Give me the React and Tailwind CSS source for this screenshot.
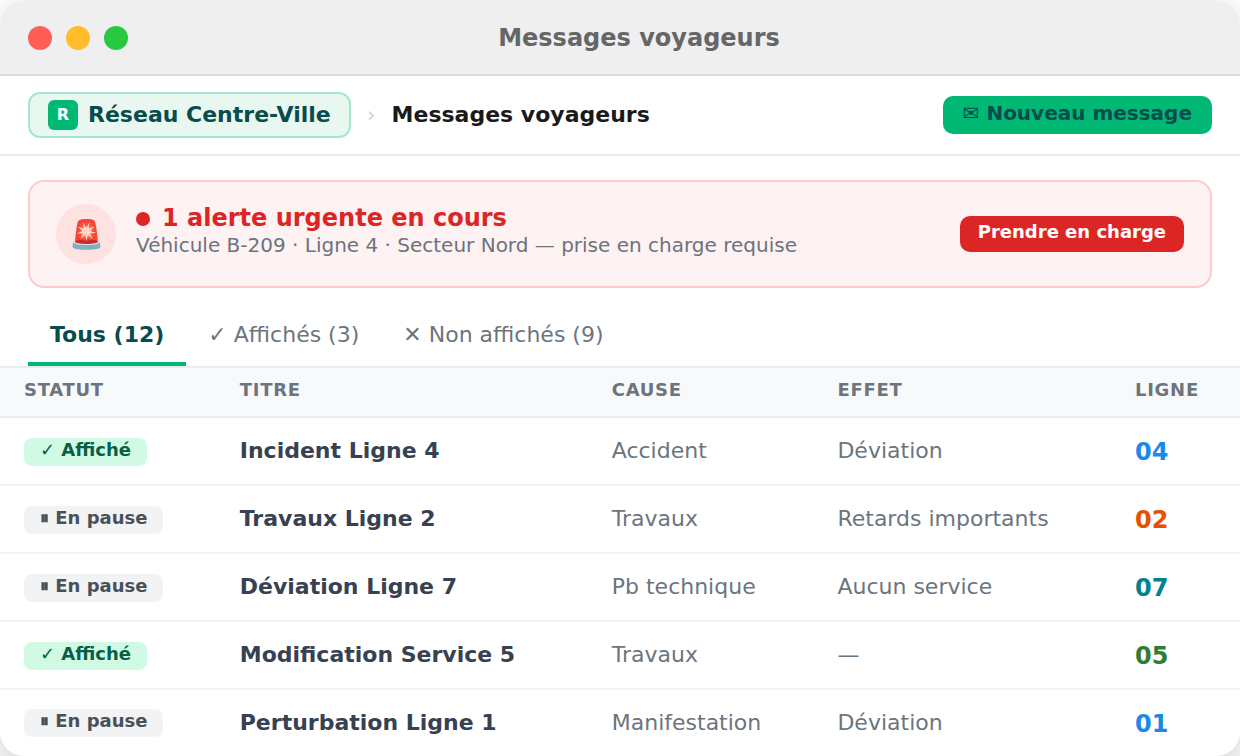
import React, { useState } from 'react';

const TABS = [
    { id: 'all', label: 'Tous (12)' },
    { id: 'shown', label: '✓ Affichés (3)' },
    { id: 'hidden', label: '✕ Non affichés (9)' },
];

const MESSAGES = [
    { id: 1, active: true, title: 'Incident Ligne 4', cause: 'Accident', effect: 'Déviation', line: '04', color: 'text-[#1e88e5]' },
    { id: 2, active: false, title: 'Travaux Ligne 2', cause: 'Travaux', effect: 'Retards importants', line: '02', color: 'text-[#e65100]' },
    { id: 3, active: false, title: 'Déviation Ligne 7', cause: 'Pb technique', effect: 'Aucun service', line: '07', color: 'text-[#00838f]' },
    { id: 4, active: true, title: 'Modification Service 5', cause: 'Travaux', effect: '—', line: '05', color: 'text-[#2e7d32]' },
    { id: 5, active: false, title: 'Perturbation Ligne 1', cause: 'Manifestation', effect: 'Déviation', line: '01', color: 'text-[#1e88e5]' },
];

const TitleBar = () => (
    <header className="flex items-center gap-3.5 px-7 pt-0.5 h-19 bg-[#efefef] border-b-2 border-[#dddddd]">
        <span className="w-6 h-6 rounded-full bg-[#ff5f57]" />
        <span className="w-6 h-6 rounded-full bg-[#ffbd2e]" />
        <span className="w-6 h-6 rounded-full bg-[#28c840]" />
        <div className="flex-1 mr-19 text-center text-2xl font-bold text-[#666666]">Messages voyageurs</div>
    </header>
);

const Breadcrumb = () => (
    <div className="flex items-center justify-between px-7 py-4 border-b-2 border-[#e9ecef]">
        <nav className="flex items-center gap-4 text-[22px] leading-7 font-bold">
            <a href="#reseau" className="flex items-center gap-2.5 px-4.5 py-1.5 rounded-xl border-2 border-[#a3e8cc] bg-[#e8f7f0] text-[#084c4c]">
                <span className="flex items-center justify-center w-7.5 h-7.5 rounded-md bg-[#00b874] text-base text-white">R</span>
                Réseau Centre-Ville
            </a>
            <span className="font-normal text-[#ced4da]">›</span>
            <h1 className="text-[#1a1a1a]">Messages voyageurs</h1>
        </nav>
        <button className="px-5 pb-1 rounded-[10px] bg-[#00b874] text-xl leading-[34px] font-bold text-[#084c4c]">
            ✉ Nouveau message
        </button>
    </div>
);

const UrgentAlert = () => (
    <section className="flex items-center gap-5 mx-7 mt-6 px-6.5 py-5.5 rounded-2xl border-2 border-[#fecaca] bg-[#fef2f2]">
        <span className="flex items-center justify-center w-15 h-15 pt-0.5 rounded-full bg-[#fee2e2] text-[28px]">🚨</span>
        <div className="flex-1 self-start">
            <h2 className="flex items-center gap-3 text-2xl leading-7 font-bold text-[#dc2626]">
                <span className="w-3.5 h-3.5 mt-0.5 rounded-full bg-[#dc2626]" />
                1 alerte urgente en cours
            </h2>
            <p className="text-xl leading-[26px] text-[#6b7280]">
                Véhicule B-209 · Ligne 4 · Secteur Nord — prise en charge requise
            </p>
        </div>
        <button className="px-4.5 pb-1 rounded-[10px] bg-[#dc2626] text-lg leading-8 font-bold text-white">
            Prendre en charge
        </button>
    </section>
);

const StatusBadge = ({ active }) => (
    <span
        className={`inline-block align-middle px-4 pb-1 rounded-lg text-lg leading-6 font-bold ${
            active ? 'bg-[#d1fae5] text-[#065f46]' : 'bg-[#f1f3f5] text-[#495057]'
        }`}
    >
        {active ? '✓ Affiché' : '⏸ En pause'}
    </span>
);

const MessagesTable = () => (
    <table className="w-full table-fixed text-left text-[22px] leading-7 text-[#6c757d]">
        <thead className="bg-[#f8f9fb] border-b-2 border-[#e9ecef] text-lg leading-6 tracking-[0.04em] uppercase">
            <tr>
                <th className="w-[17.4%] pl-6 pt-2.5 pb-3.5">Statut</th>
                <th className="w-[30%] pl-6 pt-2.5 pb-3.5">Titre</th>
                <th className="w-[18.2%] pl-6 pt-2.5 pb-3.5">Cause</th>
                <th className="w-[24%] pl-6 pt-2.5 pb-3.5">Effet</th>
                <th className="pl-6 pt-2.5 pb-3.5">Ligne</th>
            </tr>
        </thead>
        <tbody>
            {MESSAGES.map(msg => (
                <tr key={msg.id} className="h-17 border-b-2 border-[#f3f4f5] last:h-[66px] last:border-b-0">
                    <td className="pl-6"><StatusBadge active={msg.active} /></td>
                    <td className="pl-6 font-bold text-[#374151]">{msg.title}</td>
                    <td className="pl-6">{msg.cause}</td>
                    <td className="pl-6">{msg.effect}</td>
                    <td className={`pl-6 pt-0.5 text-2xl font-bold ${msg.color}`}>{msg.line}</td>
                </tr>
            ))}
        </tbody>
    </table>
);

export default function App() {
    const [tab, setTab] = useState('all');

    return (
        <div className="min-h-screen flex flex-col overflow-hidden bg-white font-['DejaVu_Sans',sans-serif]">
            <main className="flex-1 rounded-3xl overflow-hidden bg-white shadow-[0_16px_48px_rgba(0,0,0,0.2)]">
                <TitleBar />
                <Breadcrumb />
                <UrgentAlert />
                <div className="flex mt-5 px-7 border-b-2 border-[#e9ecef]">
                    {TABS.map(t => (
                        <button
                            key={t.id}
                            onClick={() => setTab(t.id)}
                            className={`px-5.5 py-3.5 border-b-4 text-[22px] leading-[26px] ${
                                tab === t.id ? 'border-[#00b874] font-bold text-[#084c4c]' : 'border-transparent text-[#6c757d]'
                            }`}
                        >
                            {t.label}
                        </button>
                    ))}
                </div>
                <MessagesTable />
            </main>
        </div>
    );
}
